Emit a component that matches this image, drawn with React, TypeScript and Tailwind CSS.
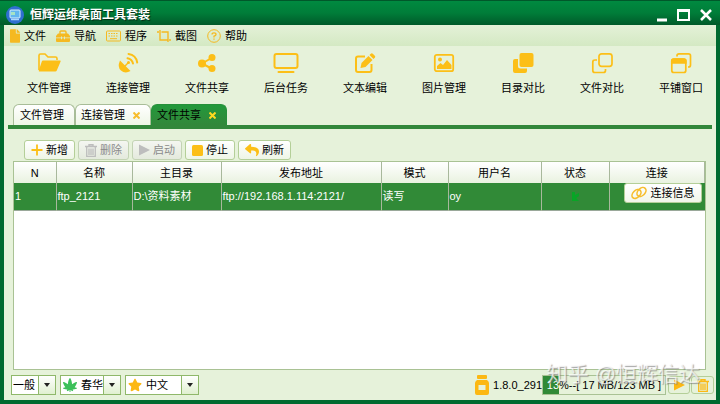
import type { ReactNode } from "react";
import { FaStar, FaCannabis, FaFile, FaReply } from "react-icons/fa";

type IconProps = { className?: string };

const FolderIcon = () => (
  <svg width="24" height="20" viewBox="0 0 24 20" fill="currentColor">
    <path d="M2 17V2.500Q2 1 3.500 1H8l3 3h7.500Q20 4 20 5.500V7" fill="none" stroke="currentColor" strokeWidth="1.600" />
    <path d="M6 7.500h17q1 0 .6 1l-3.800 9q-.4 1-1.500 1H2.500q-1 0-.7-1l3-9q.3-1 1.200-1z" />
  </svg>
);

const DishIcon = () => (
  <svg width="22" height="22" viewBox="0 0 22 22" fill="none" stroke="currentColor" strokeWidth="2">
    <path d="M3 8.500 13.500 19Q8 22 4 18.500T3 8.500z" fill="currentColor" stroke="none" />
    <path d="M7 15l4.500-4.500" strokeWidth="1.500" />
    <circle cx="11.500" cy="10.500" r="1.500" fill="currentColor" stroke="none" />
    <path d="M10.500 6.200Q15 7 16 11.500M11.500 2Q19 3 20.200 10.500" strokeLinecap="round" />
  </svg>
);

const ShareIcon = () => (
  <svg width="20" height="20" viewBox="0 0 20 20" fill="currentColor">
    <path d="M5 10.500 14.500 5M5 10.500l9.500 5" stroke="currentColor" strokeWidth="2" />
    <circle cx="5" cy="10.500" r="4" />
    <circle cx="15" cy="4.500" r="3.500" />
    <circle cx="15" cy="15.500" r="3.500" />
  </svg>
);

const MonitorIcon = () => (
  <svg width="26" height="22" viewBox="0 0 26 22" fill="none" stroke="currentColor" strokeWidth="2">
    <rect x="1.500" y="2" width="23" height="14" rx="2" />
    <path d="M5.500 20h15" strokeLinecap="round" />
  </svg>
);

const EditIcon = () => (
  <svg width="22" height="22" viewBox="0 0 22 22" fill="currentColor">
    <path d="M11 4.500H4Q2 4.500 2 6.500V18q0 2 2 2h11.500q2 0 2-2v-6" fill="none" stroke="currentColor" strokeWidth="2" />
    <path d="M6.500 16l1-5L14.500 4l4 4-7 7z" />
    <path d="M15.500 3l1.300-1.300q1-1 2 0l2 2q1 1 0 2L19.500 7z" />
  </svg>
);

const PictureIcon = () => (
  <svg width="22" height="20" viewBox="0 0 22 20" fill="currentColor">
    <rect x="1.800" y="1.800" width="18.400" height="16.400" rx="2" fill="none" stroke="currentColor" strokeWidth="1.800" />
    <circle cx="7" cy="6.500" r="2" />
    <path d="M4 16v-3l3.500-3L10 12l4-5 4.500 5v4z" />
  </svg>
);

const SquaresIcon = () => (
  <svg width="22" height="22" viewBox="0 0 22 22" fill="currentColor">
    <path d="M3 7h3v7q0 2.500 2.500 2.500H15V19q0 2-2 2H3q-2 0-2-2V9q0-2 2-2z" />
    <rect x="7.500" y="1" width="14" height="14" rx="2" />
  </svg>
);

const CompareIcon = () => (
  <svg width="22" height="22" viewBox="0 0 22 22" fill="none" stroke="currentColor" strokeWidth="1.700">
    <rect x="8" y="1.800" width="13" height="12.500" rx="2.500" />
    <path d="M6 8H4Q1.800 8 1.800 10v8.500q0 2 2 2h8.500q2.200 0 2.200-2V17" />
  </svg>
);

const TileIcon = () => (
  <svg width="22" height="22" viewBox="0 0 22 22" fill="none" stroke="currentColor" strokeWidth="1.700">
    <rect x="1.800" y="7" width="14" height="13.500" rx="2" />
    <path d="M1.800 11V9q0-2 2-2h10q2 0 2 2v2z" fill="currentColor" />
    <path d="M7 4.500V3.800q0-2 2-2h9.500q2 0 2 2V13q0 2-2 2h-.5" />
  </svg>
);

const ToolboxIcon = () => (
  <svg width="14" height="12" viewBox="0 0 14 12" fill="currentColor">
    <path d="M4 4V2q0-1 1-1h4q1 0 1 1v2" fill="none" stroke="currentColor" strokeWidth="1.400" />
    <path d="M2 3.500h10l2 2.500v1.500H9V6.500H8v1H6v-1H5v1H0V6z" />
    <path d="M0 8.300h5v1h1v-1h2v1h1v-1h5V11q0 1-1 1H1q-1 0-1-1z" />
  </svg>
);

const KeyboardIcon = () => (
  <svg width="15" height="12" viewBox="0 0 15 12" fill="none" stroke="currentColor">
    <rect x=".5" y="1" width="14" height="10" rx="1" />
    <path d="M2.500 3.500h10M2.500 6h10" strokeDasharray="1.500 1" />
    <path d="M4 8.700h7" />
  </svg>
);

const CropIcon = () => (
  <svg width="14" height="14" viewBox="0 0 14 14" fill="none" stroke="currentColor" strokeWidth="1.400">
    <path d="M3 1v10h8M0 3h2M4.500 3H11v10M12 11h2" />
  </svg>
);

const HelpIcon = () => (
  <svg width="14" height="14" viewBox="0 0 14 14" fill="none" stroke="currentColor">
    <circle cx="7" cy="7" r="6.300" />
    <path d="M5 5.600Q5 3.800 7 3.800t2 1.700Q9 6.700 7 7.200v1.300M7 9.500v1.300" strokeWidth="1.300" />
  </svg>
);

const PlusIcon = () => (
  <svg width="12" height="12" viewBox="0 0 12 12" stroke="currentColor" strokeWidth="1.800">
    <path d="M6 .5v11M.5 6h11" />
  </svg>
);

const TrashIcon = ({ className }: IconProps) => (
  <svg className={className} width="12" height="13" viewBox="0 0 12 13" fill="none" stroke="currentColor">
    <path d="M0 2.500h12M4 2V.7h4V2" strokeWidth="1.400" />
    <path d="M1.700 3v9.300h8.600V3M4 4.500v6.500M6 4.500v6.500M8 4.500v6.500" strokeWidth="1.300" />
  </svg>
);

const PlayIcon = ({ className }: IconProps) => (
  <svg className={className} width="11" height="12" viewBox="0 0 11 12" fill="currentColor">
    <path d="M0 .5 11 6 0 11.500z" />
  </svg>
);

const StopIcon = () => (
  <svg width="11" height="11" viewBox="0 0 11 11" fill="currentColor">
    <rect width="11" height="11" rx="1.500" />
  </svg>
);

const LinkIcon = () => (
  <svg width="16" height="14" viewBox="0 0 16 14" fill="none" stroke="currentColor" strokeWidth="1.600">
    <ellipse cx="5.500" cy="8" rx="5.200" ry="3.600" transform="rotate(-45 5.500 8)" />
    <ellipse cx="10.500" cy="6" rx="5.200" ry="3.600" transform="rotate(-45 10.500 6)" />
  </svg>
);

const JarIcon = () => (
  <svg width="14" height="20" viewBox="0 0 14 20" fill="currentColor">
    <rect x="2" width="10" height="4" rx="1" />
    <path fillRule="evenodd" d="M2 5h10q2 1.500 2 3v10q0 2-2 2H2q-2 0-2-2V8q0-1.500 2-3zm1.500 5v5h7v-5z" />
  </svg>
);

const menus = [
  { label: "文件", icon: <FaFile className="h-3.5 w-2.5" /> },
  { label: "导航", icon: <ToolboxIcon /> },
  { label: "程序", icon: <KeyboardIcon /> },
  { label: "截图", icon: <CropIcon /> },
  { label: "帮助", icon: <HelpIcon /> },
];

const tools = [
  { label: "文件管理", icon: <FolderIcon /> },
  { label: "连接管理", icon: <DishIcon /> },
  { label: "文件共享", icon: <ShareIcon /> },
  { label: "后台任务", icon: <MonitorIcon /> },
  { label: "文本编辑", icon: <EditIcon /> },
  { label: "图片管理", icon: <PictureIcon /> },
  { label: "目录对比", icon: <SquaresIcon /> },
  { label: "文件对比", icon: <CompareIcon /> },
  { label: "平铺窗口", icon: <TileIcon /> },
];

const actions = [
  { label: "新增", icon: <PlusIcon />, disabled: false },
  { label: "删除", icon: <TrashIcon />, disabled: true },
  { label: "启动", icon: <PlayIcon />, disabled: true },
  { label: "停止", icon: <StopIcon />, disabled: false },
  { label: "刷新", icon: <FaReply className="h-3.5 w-3.5" />, disabled: false },
];

const columns = [
  { name: "N", width: "w-[42px]" },
  { name: "名称", width: "w-[76px]" },
  { name: "主目录", width: "w-[89px]" },
  { name: "发布地址", width: "w-[160px]" },
  { name: "模式", width: "w-[67px]" },
  { name: "用户名", width: "w-[93px]" },
  { name: "状态", width: "w-[68px]" },
  { name: "连接", width: "" },
];

const row = ["1", "ftp_2121", "D:\\资料素材", "ftp://192.168.1.114:2121/", "读写", "oy"];

function Picker({ label, value, width, icon }: { label: string; value: string; width: string; icon?: ReactNode }) {
  return (
    <label className={`flex h-5 items-center border border-[#8fb86a] bg-white ${width}`}>
      {icon && <span className="ml-0.5 shrink-0">{icon}</span>}
      <select
        aria-label={label}
        className={`h-full min-w-0 flex-1 appearance-none bg-transparent outline-none ${icon ? "pl-1" : "pl-px"}`}
      >
        <option>{value}</option>
      </select>
      <span className="flex h-full w-[17px] shrink-0 items-center justify-center border-l border-[#8fb86a] bg-gradient-to-b from-white to-[#e0f0d0]">
        <svg width="6" height="4" viewBox="0 0 6 4">
          <path d="M0 0h6L3 4z" fill="#222" />
        </svg>
      </span>
    </label>
  );
}

const CloseMark = ({ className }: IconProps) => (
  <svg className={className} width="7" height="7" viewBox="0 0 7 7" stroke="currentColor" strokeWidth="2">
    <path d="M.5.5l6 6M6.500.5l-6 6" />
  </svg>
);

export default function App() {
  return (
    <div className="relative flex min-h-screen flex-col border-x-4 border-b-4 border-[#006a30] bg-[#e6f2da] font-['Liberation_Sans','Noto_Sans_CJK_SC',sans-serif] text-[11px] leading-4 text-black">
      <header className="-mx-1 flex h-[25px] items-center border-t border-[#00582a] bg-gradient-to-b from-[#008a40] via-[#007d39] to-[#005a2a] pt-1 pr-2 pl-1.5 text-white">
        <svg width="18" height="18" viewBox="0 0 18 18">
          <circle cx="9" cy="9" r="9" fill="#2f6fd0" />
          <rect x="4" y="4" width="10" height="8" rx="1" fill="#62b5ee" stroke="#d7efff" />
          <path d="M5 13.500h8" stroke="#a9d8ff" strokeWidth="1.500" />
          <path d="M5 6h4v3H5z" fill="#a6e3c4" />
        </svg>
        <h1 className="ml-1.5 text-xs font-bold [text-shadow:1px_1px_1px_#002a12]">恒辉运维桌面工具套装</h1>
        <div className="ml-auto flex items-center gap-2.5">
          <button aria-label="最小化">
            <svg width="10" height="14" viewBox="0 0 10 14">
              <path d="M0 12h10" stroke="#fff" strokeWidth="3" />
            </svg>
          </button>
          <button aria-label="最大化">
            <svg width="13" height="12" viewBox="0 0 13 12" fill="none" stroke="#fff">
              <path d="M1 1v10h11V1" strokeWidth="2" />
              <path d="M0 1.500h13" strokeWidth="3" />
            </svg>
          </button>
          <button aria-label="关闭">
            <svg width="12" height="12" viewBox="0 0 12 12" stroke="#fff" strokeWidth="2.500">
              <path d="M1 1l10 10M11 1 1 11" />
            </svg>
          </button>
        </div>
      </header>

      <nav className="flex h-[21px] items-center gap-2.5 bg-gradient-to-b from-[#e4f1d8] to-[#d4e9c3] pl-1.5">
        {menus.map((m) => (
          <button key={m.label} className="flex items-center gap-1">
            <span className="text-[#f5b921]">{m.icon}</span>
            {m.label}
          </button>
        ))}
      </nav>

      <div className="grid grid-cols-9 gap-[9px] pt-1.5 pl-2.5">
        {tools.map((t) => (
          <button key={t.label} className="flex flex-col items-center gap-1.5 whitespace-nowrap">
            <span className="flex h-[22px] items-center text-[#fcbf17]">{t.icon}</span>
            {t.label}
          </button>
        ))}
      </div>

      <div className="mx-1 mt-2 flex border-b-4 border-[#32873a] pl-[5px]">
        <button className="h-[21px] rounded-t-md border border-b-0 border-[#a8bd98] bg-gradient-to-b from-white to-[#eef6e6] pr-2.5 pl-1.5">
          文件管理
        </button>
        <button className="flex h-[21px] items-center gap-2 rounded-t-md border border-b-0 border-[#a8bd98] bg-gradient-to-b from-white to-[#eef6e6] pr-2.5 pl-[5px]">
          连接管理
          <CloseMark className="text-[#f7bd2c]" />
        </button>
        <button className="flex h-[21px] items-center gap-2 rounded-t-md border border-b-0 border-[#26903a] bg-gradient-to-b from-[#21993b] to-[#32873a] pr-2.5 pl-[5px]">
          文件共享
          <CloseMark className="text-[#ffd91f]" />
        </button>
      </div>

      <main className="mr-2.5 ml-[9px] mt-[11px] flex flex-1 flex-col">
        <div className="flex gap-[3px] pb-px pl-[11px]">
          {actions.map((a) => (
            <button
              key={a.label}
              disabled={a.disabled}
              className={
                a.disabled
                  ? "flex h-5 items-center gap-[3px] rounded-[3px] border border-[#c3d3b4] bg-gradient-to-b from-[#f4f6f1] to-[#e4eadd] px-1.5 text-[#8b8b8b]"
                  : "flex h-5 items-center gap-[3px] rounded-[3px] border border-[#b4cf98] bg-gradient-to-b from-white to-[#eef5e6] px-1.5"
              }
            >
              <span className={a.disabled ? "text-[#bdbdbd]" : "text-[#fcbf17]"}>{a.icon}</span>
              {a.label}
            </button>
          ))}
        </div>

        <div className="flex-1 border border-[#a9c294] bg-white">
          <table className="w-full table-fixed border-collapse">
            <thead>
              <tr className="h-[21px] bg-gradient-to-b from-white to-[#e9f2e0]">
                {columns.map((c) => (
                  <th key={c.name} className={`border-r border-[#a8b89c] p-0 font-normal ${c.width}`}>
                    {c.name}
                  </th>
                ))}
              </tr>
            </thead>
            <tbody>
              <tr className="h-[27px] border-b border-[#9aa89a] bg-[#318a37] text-white">
                {row.map((cell) => (
                  <td key={cell} className="border-r border-[#a8b89c] p-0 pl-px whitespace-nowrap">
                    {cell}
                  </td>
                ))}
                <td className="border-r border-[#a8b89c] p-0">
                  <svg className="mx-auto" width="9" height="9" viewBox="0 0 9 9">
                    <path d="M1 0h3v3l4-2v3L5 6l3 3H1z" fill="#08a526" />
                  </svg>
                </td>
                <td className="p-0 pr-[3px] align-top">
                  <button className="ml-auto flex h-5 items-center gap-1 rounded-[3px] border border-[#b4cf98] bg-gradient-to-b from-white to-[#f1f6ea] px-1.5 whitespace-nowrap text-black">
                    <span className="text-[#f7bd2c]">
                      <LinkIcon />
                    </span>
                    连接信息
                  </button>
                </td>
              </tr>
            </tbody>
          </table>
        </div>
      </main>

      <footer className="flex h-[30px] items-center pr-0.5 pl-[7px]">
        <div className="flex gap-1">
          <Picker label="日志级别" value="一般" width="w-[45px]" />
          <Picker label="主题" value="春华" width="w-[61px]" icon={<FaCannabis className="size-3.5 text-[#3cc05a]" />} />
          <Picker label="语言" value="中文" width="w-[74px]" icon={<FaStar className="size-3.5 text-[#fcb813]" />} />
        </div>
        <div className="ml-auto flex items-center">
          <span className="text-[#fcb813]">
            <JarIcon />
          </span>
          <span className="ml-1">1.8.0_291</span>
          <div className="relative h-5 w-[124px] border border-[#a9c294]">
            <div className="h-full bg-[#318a37]" style={{ width: "13%" }} />
            <span className="absolute inset-0 text-center leading-[18px] whitespace-nowrap">
              <span className="text-white">13</span>%--[ 17 MB/123 MB ]
            </span>
          </div>
          <button aria-label="运行" className="ml-0.5 flex h-[18px] w-[22px] items-center justify-center rounded-[3px] border border-[#b4cf98] text-[#fcb813]">
            <PlayIcon />
          </button>
          <button aria-label="清理" className="ml-px flex h-[18px] w-[23px] items-center justify-center rounded-[3px] border border-[#b4cf98] text-[#fcb813]">
            <TrashIcon />
          </button>
        </div>
      </footer>

      <div className="pointer-events-none absolute right-4 bottom-2.5 text-[21px] leading-8 whitespace-nowrap text-white/70 [text-shadow:1px_1px_1px_#777a]">
        知乎 @恒辉信达
      </div>
    </div>
  );
}
